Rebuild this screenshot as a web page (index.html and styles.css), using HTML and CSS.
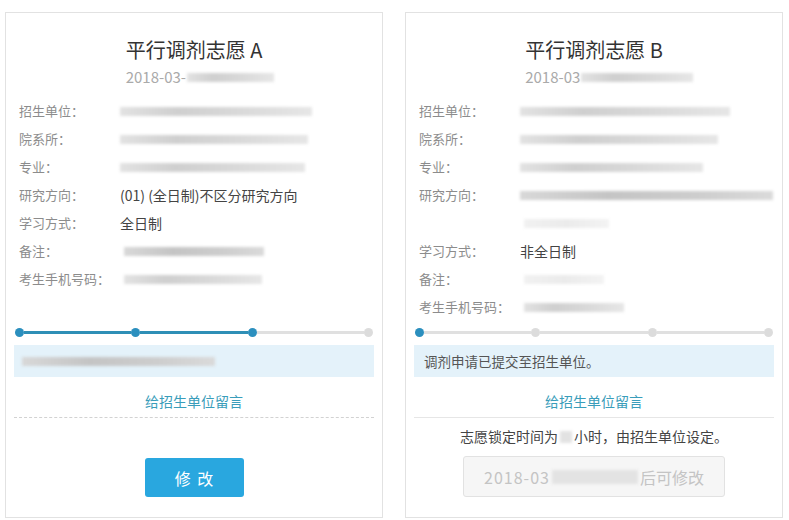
FILE: index.html
```html
<!DOCTYPE html>
<html lang="zh-CN">
<head>
<meta charset="utf-8">
<title>平行调剂志愿</title>
<link rel="stylesheet" href="styles.css">
</head>
<body>
<div class="page">
  <section class="card">
    <div class="head">
      <div class="head-in">
        <h2 class="title">平行调剂志愿 A</h2>
        <div class="date">2018-03-<i class="blur" style="width:87px"></i></div>
      </div>
    </div>
    <div class="fields">
      <div class="row"><span class="label">招生单位：</span><span class="value"><i class="blur" style="width:192px"></i></span></div>
      <div class="row"><span class="label">院系所：</span><span class="value"><i class="blur" style="width:188px"></i></span></div>
      <div class="row"><span class="label">专业：</span><span class="value"><i class="blur" style="width:185px"></i></span></div>
      <div class="row"><span class="label">研究方向：</span><span class="value">(01) (全日制)不区分研究方向</span></div>
      <div class="row"><span class="label">学习方式：</span><span class="value">全日制</span></div>
      <div class="row"><span class="label">备注：</span><span class="value"><i class="blur dark indent" style="width:140px"></i></span></div>
      <div class="row"><span class="label">考生手机号码：</span><span class="value"><i class="blur indent" style="width:138px"></i></span></div>
    </div>
    <div class="progress">
      <span class="dot on"></span><span class="seg on"></span>
      <span class="dot on"></span><span class="seg on"></span>
      <span class="dot on"></span><span class="seg"></span>
      <span class="dot"></span>
    </div>
    <div class="notice"><i class="blur dark" style="width:193px"></i></div>
    <div class="link">给招生单位留言</div>
    <div class="sep dashed"></div>
    <div class="action"><button class="btn">修 改</button></div>
  </section>

  <section class="card">
    <div class="head">
      <div class="head-in">
        <h2 class="title">平行调剂志愿 B</h2>
        <div class="date">2018-03<i class="blur" style="width:112px"></i></div>
      </div>
    </div>
    <div class="fields">
      <div class="row"><span class="label">招生单位：</span><span class="value"><i class="blur" style="width:210px"></i></span></div>
      <div class="row"><span class="label">院系所：</span><span class="value"><i class="blur" style="width:198px"></i></span></div>
      <div class="row"><span class="label">专业：</span><span class="value"><i class="blur" style="width:183px"></i></span></div>
      <div class="row"><span class="label">研究方向：</span><span class="value multi"><i class="blur dark" style="width:253px"></i><i class="blur faint indent" style="width:85px"></i></span></div>
      <div class="row"><span class="label">学习方式：</span><span class="value">非全日制</span></div>
      <div class="row"><span class="label">备注：</span><span class="value"><i class="blur faint indent" style="width:80px"></i></span></div>
      <div class="row"><span class="label">考生手机号码：</span><span class="value"><i class="blur indent" style="width:100px"></i></span></div>
    </div>
    <div class="progress">
      <span class="dot on"></span><span class="seg"></span>
      <span class="dot"></span><span class="seg"></span>
      <span class="dot"></span><span class="seg"></span>
      <span class="dot"></span>
    </div>
    <div class="notice">调剂申请已提交至招生单位。</div>
    <div class="link">给招生单位留言</div>
    <div class="sep"></div>
    <div class="lock">志愿锁定时间为<i class="blur small"></i>小时，由招生单位设定。</div>
    <div class="action"><div class="disabled"><span class="dnum">2018-03</span><i class="blur big" style="width:86px"></i>后可修改</div></div>
  </section>
</div>
</body>
</html>
```
FILE: styles.css
```css
* { box-sizing: border-box; }
html, body { margin: 0; padding: 0; background: #fff; }
body {
  font-family: "Noto Sans CJK SC", "Noto Sans", sans-serif;
  color: #444;
  width: 789px;
  height: 520px;
  overflow: hidden;
}
.page {
  display: flex;
  gap: 22px;
  padding: 12px 6px 0 5px;
}
.card {
  width: 378px;
  height: 506px;
  border: 1px solid #e2e2e2;
  padding: 25px 8px 0;
  display: flex;
  flex-direction: column;
}
.head { display: flex; justify-content: center; }
.head-in { text-align: left; }
.title {
  margin: 0;
  font-size: 20px;
  line-height: 24px;
  font-weight: normal;
  color: #333;
}
.date {
  margin-top: 5px;
  width: 0;
  white-space: nowrap;
  font-size: 15px;
  line-height: 20px;
  color: #aaa;
  display: flex;
  align-items: center;
}
.date .blur { margin-left: 1px; flex: none; }
.fields {
  margin-top: 10px;
  min-height: 226px;
  padding-left: 5px;
}
.row {
  display: flex;
  align-items: flex-start;
  line-height: 28px;
}
.label {
  width: 101px;
  flex: none;
  font-size: 13px;
  color: #8c8c8c;
}
.value {
  font-size: 14px;
  color: #444;
  display: flex;
  align-items: center;
  min-height: 28px;
}
.value.multi {
  flex-direction: column;
  align-items: flex-start;
}
.value.multi .blur { margin: 9.5px 0 0; }
.value.multi .blur + .blur { margin: 19px 0 9.5px 4px; }
.blur {
  display: inline-block;
  height: 9px;
  background: linear-gradient(90deg, #e2e2e2 0%, #cfcfcf 30%, #d8d8d8 60%, #e6e6e6 100%);
  filter: blur(1.4px);
}
.blur.dark {
  background: linear-gradient(90deg, #d8d8d8 0%, #c4c4c4 35%, #cdcdcd 70%, #dadada 100%);
}
.blur.faint {
  background: linear-gradient(90deg, #f1f1f1, #ebebeb, #f3f3f3);
}
.blur.indent { margin-left: 4px; }
.blur.small { width: 12px; height: 12px; background: #e2e2e2; margin: 0 2px; vertical-align: -1px; }
.blur.big { height: 14px; margin: 0 2px; background: #e3e3e3; }
.progress {
  margin-top: 4px;
  height: 10px;
  padding: 0 1px;
  display: flex;
  align-items: center;
}
.dot {
  width: 9px;
  height: 9px;
  border-radius: 50%;
  background: #dcdcdc;
  flex: none;
}
.dot.on { background: #2b8fbe; }
.seg {
  flex: 1;
  height: 3px;
  background: #e0e0e0;
}
.seg.on { background: #2f8fb6; }
.notice {
  margin-top: 8px;
  height: 32px;
  padding: 0 10px;
  background: #e4f2fa;
  font-size: 13.5px;
  color: #555;
  display: flex;
  align-items: center;
}
.notice .blur { margin-left: -2px; }
.link {
  margin-top: 12px;
  text-align: center;
  font-size: 14px;
  line-height: 24px;
  color: #3a9dba;
}
.sep {
  margin-top: 4px;
  border-top: 1px solid #e6e6e6;
}
.sep.dashed { border-top: 1px dashed #d2d2d2; }
.lock {
  margin-top: 8px;
  text-align: center;
  font-size: 14px;
  line-height: 20px;
  color: #444;
}
.action {
  display: flex;
  justify-content: center;
}
.btn {
  margin-top: 40px;
  width: 99px;
  height: 39px;
  border: none;
  border-radius: 3px;
  background: #29a7df;
  color: #fff;
  font-family: inherit;
  font-size: 16px;
  letter-spacing: 1.5px;
  padding: 0 0 0 1.5px;
}
.disabled {
  margin-top: 10px;
  width: 262px;
  height: 41px;
  border: 1px solid #e2e2e2;
  border-radius: 3px;
  background: #f6f6f6;
  color: #c4c4c4;
  font-size: 16px;
  display: flex;
  align-items: center;
  justify-content: center;
}
.dnum { letter-spacing: 1px; }
```
